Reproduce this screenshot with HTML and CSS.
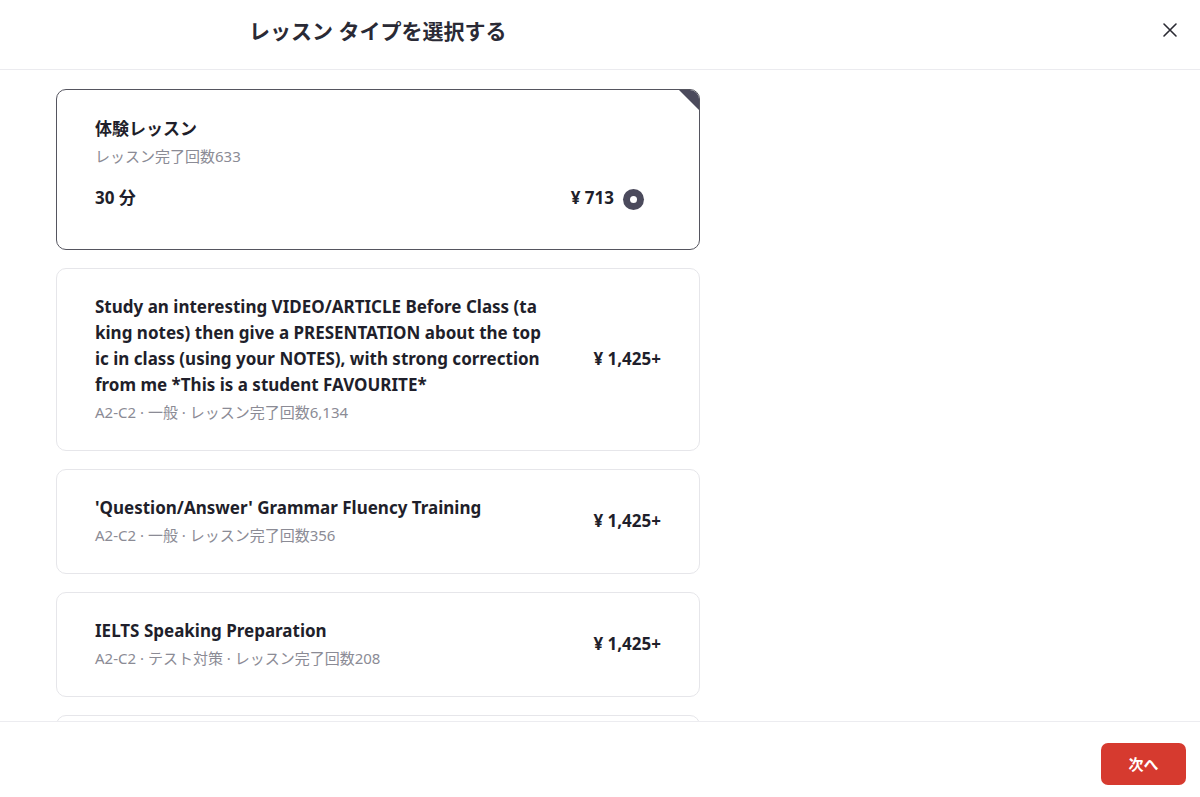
FILE: index.html
```html
<!DOCTYPE html>
<html lang="ja">
<head>
<meta charset="utf-8">
<link rel="stylesheet" href="styles.css">
</head>
<body>
<div class="modal">
  <header class="head">
    <h1 class="head-title">レッスン タイプを選択する</h1>
    <button class="close" aria-label="close">
      <svg width="16" height="16" viewBox="0 0 16 16"><path d="M2 2 L14 14 M14 2 L2 14" stroke="#2a2a33" stroke-width="1.6" stroke-linecap="round"/></svg>
    </button>
  </header>
  <main class="body">
    <div class="list">
      <div class="card selected">
        <span class="corner"></span>
        <div class="title">体験レッスン</div>
        <div class="meta">レッスン完了回数633</div>
        <div class="trial-row">
          <span class="dur">30 分</span>
          <span class="price-wrap"><span class="price">¥ 713</span><span class="radio"></span></span>
        </div>
      </div>
      <div class="card">
        <div class="info">
          <div class="title">Study an interesting VIDEO/ARTICLE Before Class (taking notes) then give a PRESENTATION about the topic in class (using your NOTES), with strong correction from me *This is a student FAVOURITE*</div>
          <div class="meta">A2-C2 · 一般 · レッスン完了回数6,134</div>
        </div>
        <div class="price">¥ 1,425+</div>
      </div>
      <div class="card">
        <div class="info">
          <div class="title">'Question/Answer' Grammar Fluency Training</div>
          <div class="meta">A2-C2 · 一般 · レッスン完了回数356</div>
        </div>
        <div class="price">¥ 1,425+</div>
      </div>
      <div class="card">
        <div class="info">
          <div class="title">IELTS Speaking Preparation</div>
          <div class="meta">A2-C2 · テスト対策 · レッスン完了回数208</div>
        </div>
        <div class="price">¥ 1,425+</div>
      </div>
      <div class="card card-empty"></div>
    </div>
  </main>
  <footer class="foot">
    <button class="next">次へ</button>
  </footer>
</div>
</body>
</html>
```

FILE: styles.css
```css
* { box-sizing: border-box; }
html, body {
  margin: 0;
  height: 100%;
  background: #ffffff;
}
body {
  font-family: "Noto Sans", "Noto Sans CJK JP", sans-serif;
  color: #1f1f2b;
  overflow: hidden;
}
.modal {
  height: 797px;
  display: flex;
  flex-direction: column;
}
.head {
  height: 70px;
  flex: none;
  display: flex;
  align-items: center;
  justify-content: space-between;
  padding: 0 22px 0 249px;
  border-bottom: 1px solid #ebebef;
}
.head-title {
  margin: 0;
  font-size: 21px;
  font-weight: 700;
  color: #2a2a35;
  line-height: 28px;
  padding-bottom: 8px;
}
.close {
  border: 0;
  background: none;
  padding: 0;
  width: 16px;
  height: 16px;
  display: flex;
  margin-bottom: 10px;
}
.body {
  flex: 1;
  overflow: hidden;
  padding: 19px 0 0 56px;
}
.list {
  width: 644px;
  display: flex;
  flex-direction: column;
  gap: 18px;
}
.card {
  position: relative;
  border: 1px solid #e6e6ea;
  border-radius: 10px;
  background: #fff;
  padding: 25px 38px 27px 38px;
  display: flex;
  align-items: center;
  justify-content: space-between;
  overflow: hidden;
}
.card.selected {
  display: block;
  border-color: #55555f;
  padding: 26px 55px 38px 38px;
}
.card-empty {
  height: 104px;
  flex: none;
}
.corner {
  position: absolute;
  top: 0;
  right: 0;
  width: 0;
  height: 0;
  border-top: 20px solid #4b4a5c;
  border-left: 20px solid transparent;
}
.info {
  width: 448px;
}
.title {
  font-size: 17px;
  font-weight: 700;
  line-height: 26px;
  color: #1f1f2b;
  word-break: break-all;
}
.meta {
  font-size: 15px;
  line-height: 22px;
  color: #8b8b95;
  margin-top: 3px;
}
.price {
  font-size: 17px;
  font-weight: 700;
  line-height: 26px;
  color: #1f1f2b;
  white-space: nowrap;
}
.trial-row {
  margin-top: 18px;
  display: flex;
  justify-content: space-between;
  align-items: center;
}
.dur {
  font-size: 17px;
  font-weight: 700;
  line-height: 26px;
}
.price-wrap {
  display: flex;
  align-items: center;
  gap: 9px;
}
.radio {
  width: 21px;
  height: 21px;
  border-radius: 50%;
  background: #4b4a5c;
  display: flex;
  align-items: center;
  justify-content: center;
  margin-top: 3px;
}
.radio::after {
  content: "";
  width: 7px;
  height: 7px;
  border-radius: 50%;
  background: #fff;
}
.foot {
  height: 76px;
  flex: none;
  border-top: 1px solid #ececf0;
  background: #fff;
  display: flex;
  justify-content: flex-end;
  align-items: center;
  padding: 8px 14px 0 0;
}
.next {
  width: 85px;
  height: 42px;
  border: 0;
  border-radius: 7px;
  background: #d63a2f;
  color: #fff;
  font-family: "Noto Sans CJK JP", "Noto Sans", sans-serif;
  font-size: 15px;
  font-weight: 700;
}
```
